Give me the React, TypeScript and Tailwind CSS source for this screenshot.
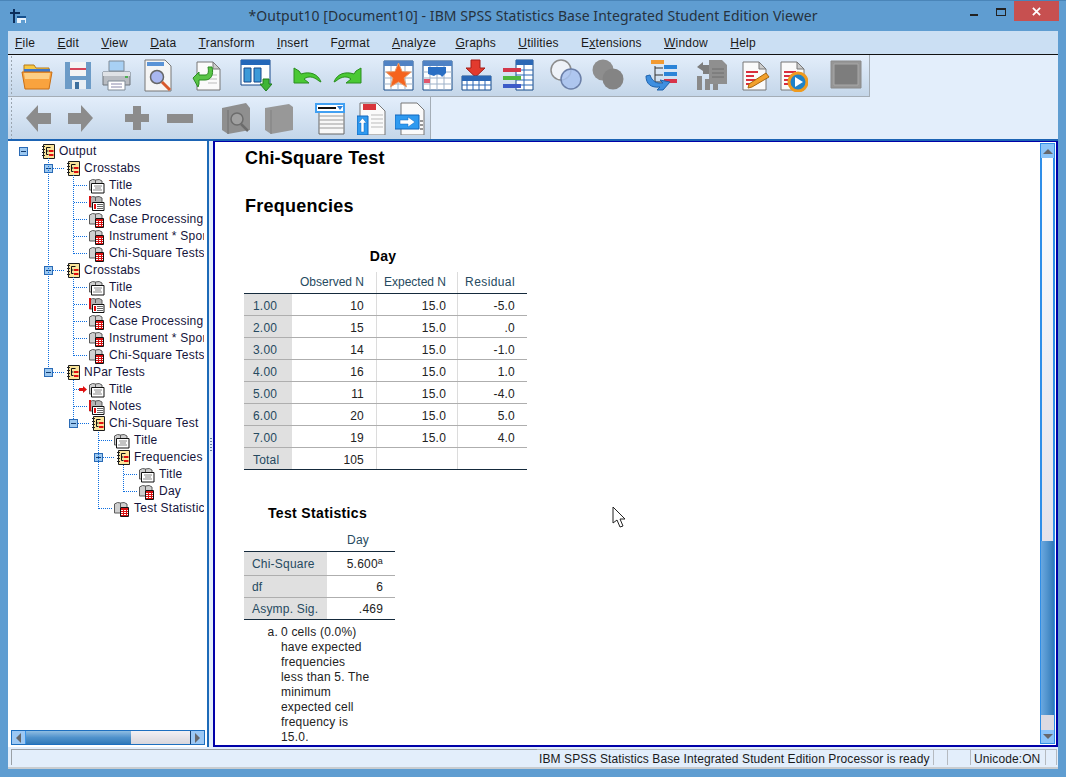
import type { ReactNode } from "react";

const sans = "font-['Liberation_Sans',Arial,sans-serif]";

function Doc({ children }: { children?: ReactNode }) {
  return (
    <>
      <path d="M5 3h16l7 7v21H5z" fill="#fafafa" stroke="#777" />
      <path d="M21 3v7h7z" fill="#ccc" stroke="#777" />
      {children}
    </>
  );
}

const toolbarIcons: Record<string, ReactNode> = {
  open: (
    <>
      <path d="M3 9V6h10l2 3h13v6H3z" fill="#f6c945" stroke="#b5791a" />
      <path d="M3 10h26v5H3z" fill="#3f78c9" />
      <path d="M1 13h30l-3 17H4z" fill="#f9a33e" stroke="#c96f14" />
      <path d="M3 14h26l-1 6H4z" fill="#fdcf85" />
    </>
  ),
  save: (
    <>
      <path d="M3 3h26v27H3z" fill="#6c9bc7" />
      <path d="M8 3h16v14H8z" fill="#f4f4f4" />
      <path d="M8 10h16" stroke="#d6465a" strokeWidth="2" />
      <path d="M10 21h14v9H10z" fill="#e8eef4" />
      <path d="M13 23h4v7h-4z" fill="#3d6f9e" />
    </>
  ),
  print: (
    <>
      <path d="M8 2h15v10H8z" fill="#a8d0f4" stroke="#7e8a96" />
      <path d="M2 13h27v13H2z" fill="#b8bcc2" stroke="#6f747a" />
      <path d="M2 13h27v4H2z" fill="#dfe2e6" />
      <path d="M7 22h17v9H7z" fill="#fff" stroke="#7e8a96" />
      <path d="M10 25h11M10 28h11" stroke="#88a" />
      <rect x="24" y="17" width="3" height="2" fill="#4caf50" />
    </>
  ),
  preview: (
    <>
      <path d="M3 1h20l6 6v25H3z" fill="#f5f5f5" stroke="#777" />
      <path d="M5 3h17v4H5z" fill="#5a93d6" />
      <circle cx="15" cy="18" r="6.500" fill="#a9b7f0" stroke="#666" strokeWidth="1.500" />
      <path d="M20 23l8 8" stroke="#d8592c" strokeWidth="3" />
    </>
  ),
  exportDoc: (
    <>
      <Doc>
        <path d="M16 16h9M16 20h9M16 24h9" stroke="#bbb" />
      </Doc>
      <path d="M1 19l6-6v3h6c3 0 4-2 3-8h4c2 8-1 13-7 13H7v4l-1 3z" fill="#59c447" stroke="#2a8a22" />
    </>
  ),
  designate: (
    <>
      <path d="M1 1h29v25H1z" fill="#fff" stroke="#15468a" />
      <path d="M1 1h29v5H1z" fill="#2467b9" />
      <path d="M4 9h7v14H4zM14 9h7v14h-7z" fill="#3d9ad8" stroke="#15468a" />
      <path d="M23 20h6v5h3l-6 7-6-7h3z" fill="#3fb535" stroke="#1e7d1c" />
    </>
  ),
  undo: <path d="M3 9v15h15l-5-4c4-3 9-3 15 2l2 1c-3-8-11-11-20-8L8 12z" fill="#4ac934" stroke="#2a8e20" />,
  redo: <path d="M29 9v15H14l5-4c-4-3-9-3-15 2l-2 1c3-8 11-11 20-8l2-3z" fill="#4ac934" stroke="#2a8e20" />,
  star: (
    <>
      <path d="M1 2h29v29H1z" fill="#fff" stroke="#174a88" />
      <path d="M1 2h29v5H1z" fill="#4f82c4" />
      <path d="M1 13h29M1 19h29M1 25h29M8 7v24M15 7v24M22 7v24" stroke="#9db1c8" />
      <path d="M15.500 4l3.600 8.500 9 .6-7 5.800 2.400 9-8-5-8 5 2.400-9-7-5.800 9-.6z" fill="#f5631e" stroke="#e8a070" />
    </>
  ),
  table: (
    <>
      <path d="M1 2h29v29H1z" fill="#fff" stroke="#174a88" />
      <path d="M1 2h29v5H1z" fill="#4f82c4" />
      <path d="M1 13h29M1 19h29M1 25h29M8 7v24M15 7v24M22 7v24" stroke="#9db1c8" />
      <path d="M6 8h18v6l-4 4c-2-3-5-3-8-1l-6-2z" fill="#2a6fc4" />
      <path d="M2 20h6v4H2z" fill="#e2566c" />
    </>
  ),
  insertCase: (
    <>
      <path d="M10 1h9v8h5l-9.500 9L5 9h5z" fill="#e23a2e" stroke="#a51c16" />
      <path d="M1 17h29v14H1z" fill="#fff" stroke="#174a88" />
      <path d="M1 17h29v5H1z" fill="#2b67b5" />
      <path d="M1 26h29M6 22v9M12 22v9M18 22v9M24 22v9" stroke="#2b67b5" />
    </>
  ),
  variables: (
    <>
      <path d="M14 1h17v30H14z" fill="#fff" stroke="#174a88" />
      <path d="M14 1h17v5H14z" fill="#2b67b5" />
      <path d="M14 11h17M14 16h17M14 21h17M14 26h17M22 6v25" stroke="#2b67b5" />
      <path d="M1 9h18v4H1z" fill="#d3384a" />
      <path d="M1 17h18v4H1z" fill="#4fb83e" />
      <path d="M1 25h18v4H1z" fill="#3c5bc8" />
    </>
  ),
  circles: (
    <>
      <circle cx="11" cy="11" r="10" fill="#eef2f8" stroke="#8c8c8c" strokeWidth="1.500" />
      <circle cx="21" cy="20" r="10" fill="#a8c2ee" fillOpacity="0.850" stroke="#6b7fa8" strokeWidth="1.500" />
    </>
  ),
  circlesGray: (
    <>
      <circle cx="11" cy="11" r="10.500" fill="#8e8e8e" />
      <circle cx="21" cy="20" r="10.500" fill="#848484" />
    </>
  ),
  tree: (
    <>
      <path d="M10 7v18M10 9h8M10 16h8M10 23h8" stroke="#333" />
      <path d="M6 1h13v4H6z" fill="#f29a32" />
      <path d="M19 6h13v4H19zM19 13h13v4H19z" fill="#2b84d8" />
      <path d="M19 20h13v4H19z" fill="#d8344a" />
      <path d="M1 17c0 8 5 12 14 11l-3 3h6l7-8-10-2 3 3c-7 1-11-2-13-8z" fill="#3e8fe0" stroke="#1e62ac" />
    </>
  ),
  pivotGray: (
    <>
      <path d="M14 1h13l5 5v19H14z" fill="#8f8f8f" />
      <path d="M17 10h12M17 14h12M17 18h12" stroke="#6f6f6f" />
      <path d="M2 17h5v14H2zM10 20h5v11h-5zM18 25h5v6h-5z" fill="#8a8a8a" />
      <path d="M2 8l6-5v3h6v9H8v-3z" fill="#7d7d7d" />
    </>
  ),
  docPencil: (
    <Doc>
      <path d="M8 13h12M8 17h8M8 21h10M8 25h7" stroke="#d92e3e" strokeWidth="2" />
      <path d="M11 25l17-11 3 4-17 10-4 1z" fill="#f2a12c" stroke="#a8660e" />
    </Doc>
  ),
  docPlay: (
    <>
      <Doc>
        <path d="M8 13h12M8 17h8M8 21h10M8 25h7" stroke="#d92e3e" strokeWidth="2" />
      </Doc>
      <circle cx="22" cy="23" r="9" fill="#1f82c8" stroke="#ef9a1e" strokeWidth="3" />
      <path d="M19 18l8 5-8 5z" fill="#fff" />
    </>
  ),
  squareGray: (
    <>
      <path d="M1 2h30v27H1z" fill="#969696" stroke="#8a8a8a" />
      <path d="M4 5h24v21H4z" fill="#7d7d7d" stroke="#a8a8a8" />
    </>
  ),
  left: <path d="M3 16L15 3v8h13v11H15v8z" fill="#8c8c8c" />,
  right: <path d="M29 16L17 3v8H4v11h13v8z" fill="#8c8c8c" />,
  plus: <path d="M12 4h8v8h8v8h-8v8h-8v-8H4v-8h8z" fill="#8c8c8c" />,
  minus: <path d="M3 12h26v9H3z" fill="#8c8c8c" />,
  bookSearch: (
    <>
      <path d="M2 6l24-5 4 5v22l-22 4-6-4z" fill="#8f8f8f" />
      <path d="M8 8v24" stroke="#707070" />
      <circle cx="17" cy="17" r="6" fill="#a0a0a0" stroke="#6c6c6c" strokeWidth="1.500" />
      <path d="M21 22l7 7" stroke="#6c6c6c" strokeWidth="2.500" />
    </>
  ),
  book: (
    <>
      <path d="M2 6l24-4 4 3v23l-22 4-6-4z" fill="#989898" />
      <path d="M8 8v24" stroke="#808080" />
    </>
  ),
  listBox: (
    <>
      <path d="M5 8h25v24H5z" fill="#f8f8f8" stroke="#666" />
      <path d="M5 14h25M5 18h25M5 22h25M5 26h25" stroke="#9a9a9a" />
      <path d="M1 1h30v10H1z" fill="#41a0f2" />
      <path d="M3 3h26v6H3z" fill="#fff" />
      <path d="M4 5h18v2H4z" fill="#111" />
      <path d="M23 4h6l-3 4z" fill="#2b7fd8" />
    </>
  ),
  docUp: (
    <>
      <path d="M3 1h17l8 8v24H3z" fill="#fafafa" stroke="#777" />
      <path d="M6 2h13v6H6z" fill="#d8343a" />
      <path d="M14 13h12M14 17h12M14 21h12M14 25h12" stroke="#bbb" />
      <path d="M0 14h11v19H0z" fill="#2f9af0" stroke="#1366bc" />
      <path d="M5.500 16l4 5H7v9H4v-9H1.500z" fill="#fff" stroke="#1366bc" strokeWidth="0.500" />
    </>
  ),
  docRight: (
    <>
      <path d="M6 1h16l7 7v25H6z" fill="#fafafa" stroke="#777" />
      <path d="M25 19h3M25 23h3M25 27h3" stroke="#333" />
      <path d="M0 13h24v14H0z" fill="#2f9af0" stroke="#1366bc" />
      <path d="M5 18h8v-3l7 5-7 5v-3H5z" fill="#fff" stroke="#1366bc" strokeWidth="0.500" />
    </>
  ),
};

function ToolIcon({ name, ml }: { name: string; ml: string }) {
  return (
    <svg viewBox="0 0 32 33" className={`w-[32px] h-[33px] shrink-0 ${ml}`}>
      {toolbarIcons[name]}
    </svg>
  );
}

function Grip() {
  return <div className="w-[3px] h-full ml-[2px] shrink-0 bg-[radial-gradient(circle,#9aa5b0_1px,transparent_1px)] bg-[length:3px_4px]" />;
}

function TreeIcon({ kind }: { kind: string }) {
  if (kind === "log") {
    return (
      <svg viewBox="0 0 14 15" className="w-[14px] h-[15px] shrink-0">
        <path d="M2.500 .5h11v14h-11z" fill="#fbe59b" stroke="#1c1c1c" />
        <path d="M1 2.500h3M1 5.500h3M1 8.500h3M1 11.500h3" stroke="#222" />
        <path d="M5.500 3.500h4M5.500 3.500v7h2M5.500 7h2" fill="none" stroke="#111" />
        <path d="M8 6h4.500v2H8zM8 10h4.500v2H8z" fill="#e01010" />
      </svg>
    );
  }
  const isNotes = kind === "notes";
  return (
    <svg viewBox="0 0 17 16" className="w-[17px] h-[16px] shrink-0">
      <path d="M1.500 3q3-2.500 6-1 4-1.500 6.500 1v9H1.500z" fill={isNotes ? "#b4b4b4" : "#cfcfcf"} stroke="#5a5a5a" />
      <path d="M7.500 2v4" stroke="#5a5a5a" />
      {isNotes && <path d="M1 1h2v11H1z" fill="#d81010" />}
      {kind === "title" ? (
        <>
          <path d="M3.500 5.500h12.500v9.500H3.500z" fill="#fff" stroke="#111" />
          <path d="M6 8h8M7 10h6M5 12h9" stroke="#888" />
        </>
      ) : isNotes ? (
        <>
          <path d="M4.500 7.500h11.500v8H4.500z" fill="#fff" stroke="#111" />
          <path d="M6 9h2v5H6z" fill="#e01010" />
          <path d="M9 9.500h6M9 11.500h6M9 13.500h6" stroke="#666" />
        </>
      ) : (
        <>
          <path d="M7.500 6.500h8v9h-8z" fill="#fff" stroke="#111" />
          <path d="M8 7h7v2H8zM8 10h7v1H8zM8 12h7v1H8zM8 14h7v1H8zM10 9h1v6h-1zM13 9h1v6h-1z" fill="#d81010" />
        </>
      )}
    </svg>
  );
}

function Expander() {
  return (
    <span className="w-[9px] h-[9px] shrink-0 border border-[#2a6ab5] bg-[#9cc8f0] flex items-center justify-center">
      <span className="w-[5px] h-px bg-[#123c70]" />
    </span>
  );
}

type Node = { label: string; depth: number; kind: string; open?: boolean; arrow?: boolean };

const crosstabs: Node[] = [
  { label: "Crosstabs", depth: 1, kind: "log", open: true },
  { label: "Title", depth: 2, kind: "title" },
  { label: "Notes", depth: 2, kind: "notes" },
  { label: "Case Processing Summary", depth: 2, kind: "table" },
  { label: "Instrument * Sport Crosstabulation", depth: 2, kind: "table" },
  { label: "Chi-Square Tests", depth: 2, kind: "table" },
];

const treeNodes: Node[] = [
  { label: "Output", depth: 0, kind: "log", open: true },
  ...crosstabs,
  ...crosstabs,
  { label: "NPar Tests", depth: 1, kind: "log", open: true },
  { label: "Title", depth: 2, kind: "title", arrow: true },
  { label: "Notes", depth: 2, kind: "notes" },
  { label: "Chi-Square Test", depth: 2, kind: "log", open: true },
  { label: "Title", depth: 3, kind: "title" },
  { label: "Frequencies", depth: 3, kind: "log", open: true },
  { label: "Title", depth: 4, kind: "title" },
  { label: "Day", depth: 4, kind: "table" },
  { label: "Test Statistics", depth: 3, kind: "table" },
];

const treeIndent = ["pl-[11px]", "pl-[36px]", "pl-[61px]", "pl-[86px]", "pl-[111px]"];

function TreeRow({ node }: { node: Node }) {
  return (
    <div className={`h-[17px] flex items-center ${treeIndent[node.depth]}`}>
      <div className="w-[21px] shrink-0 flex items-center justify-start">
        {node.open ? (
          <Expander />
        ) : node.arrow ? (
          <svg viewBox="0 0 8 7" className="w-[8px] h-[7px] ml-[10px] shrink-0">
            <path d="M0 2h4V0l4 3.500L4 7V5H0z" fill="#e01010" />
          </svg>
        ) : null}
      </div>
      <div className={`${node.kind === "log" ? "w-[18px] pl-[1px]" : "w-[20px] -ml-[2px]"} shrink-0 flex items-center`}>
        <TreeIcon kind={node.kind} />
      </div>
      <span className="whitespace-nowrap text-[12px] leading-[17px] tracking-[0.25px] ml-[1px] text-[#14143c]">{node.label}</span>
    </div>
  );
}

function TreeLines() {
  return (
    <svg className="absolute left-0 top-[1px] w-[198px] h-[400px] pointer-events-none" viewBox="0 0 198 400" shapeRendering="crispEdges">
      <g stroke="#0f6fe0" strokeDasharray="1 1" fill="none">
        <path d="M40.500 16V226M45 26.500h11M45 128.500h11M45 230.500h11" />
        <path d="M65.500 33V111.500M65.500 43.500h13M65.500 60.500h13M65.500 77.500h13M65.500 94.500h13M65.500 111.500h13" />
        <path d="M65.500 135V213.500M65.500 145.500h13M65.500 162.500h13M65.500 179.500h13M65.500 196.500h13M65.500 213.500h13" />
        <path d="M65.500 238V277M65.500 247.500h6M65.500 264.500h13M70 281.500h11" />
        <path d="M90.500 290V366.500M90.500 298.500h13M95 315.500h11M90.500 366.500h13" />
        <path d="M115.500 323V349.500M115.500 332.500h13M115.500 349.500h13" />
      </g>
    </svg>
  );
}

function HScroll() {
  return (
    <div className="h-[15px] ml-[3px] mr-[2px] mb-[2px] flex border border-[#1d6fc0] bg-[#e3e1e8] shrink-0 relative">
      <div className="w-[14px] bg-[#9cc8f4] flex items-center justify-center border-r border-[#3b94e6]">
        <span className="border-y-[5px] border-y-transparent border-r-[5px] border-r-[#66686c]" />
      </div>
      <div className="w-[105px] bg-gradient-to-b from-[#8fbde2] via-[#4f92cc] to-[#2f78b8]" />
      <div className="flex-1 bg-gradient-to-b from-[#f2f0f4] to-[#d8d6dc]" />
      <div className="w-[14px] bg-[#9cc8f4] flex items-center justify-center border-l border-[#173f6e]">
        <span className="border-y-[5px] border-y-transparent border-l-[5px] border-l-[#66686c]" />
      </div>
    </div>
  );
}

function VScroll() {
  return (
    <div className="w-[15px] my-[1px] shrink-0 flex flex-col border border-[#2f8ee8] bg-white">
      <div className="h-[14px] bg-[#8cc4f8] flex items-center justify-center">
        <span className="border-x-[5px] border-x-transparent border-b-[5px] border-b-[#66686c]" />
      </div>
      <div className="flex-1 border-x border-[#2f8ee8] bg-gradient-to-b from-white to-[#e4e2ea]" />
      <div className="h-[174px] bg-gradient-to-r from-[#6aa8e0] via-[#4f92cc] to-[#2f78b8]" />
      <div className="h-[15px] bg-[#dcdae2]" />
      <div className="h-[13px] bg-[#8cc4f8] flex items-center justify-center">
        <span className="border-x-[5px] border-x-transparent border-t-[5px] border-t-[#66686c]" />
      </div>
    </div>
  );
}

const dayRows = [
  ["1.00", "10", "15.0", "-5.0"],
  ["2.00", "15", "15.0", ".0"],
  ["3.00", "14", "15.0", "-1.0"],
  ["4.00", "16", "15.0", "1.0"],
  ["5.00", "11", "15.0", "-4.0"],
  ["6.00", "20", "15.0", "5.0"],
  ["7.00", "19", "15.0", "4.0"],
  ["Total", "105", "", ""],
];

function DayTable() {
  return (
    <div className="ml-[29px] w-[283px] tracking-[0.2px] text-[12px]">
      <div className="mt-[4px] text-center pr-[5px] text-[14px] font-bold text-black h-[29px] leading-[27px]">Day</div>
      <div className="flex h-[22px] border-b border-[#152a3c] text-[#264a60] leading-[20px] tracking-normal">
        <div className="w-[48px]" />
        <div className="w-[85px] pr-[12px] text-right border-r border-[#dcdcdc]">Observed N</div>
        <div className="w-[81px] pr-[11px] text-right border-r border-[#dcdcdc]">Expected N</div>
        <div className="w-[69px] pr-[12px] text-right tracking-[0.4px]">Residual</div>
      </div>
      {dayRows.map((row, i) => (
        <div key={row[0]} className={`flex h-[22px] leading-[24px] border-b ${i === 7 ? "border-[#152a3c]" : "border-[#aeaeae]"} text-[#222]`}>
          <div className="w-[48px] pl-[9px] bg-[#e0e0e0] text-[#264a60]">{row[0]}</div>
          <div className="w-[85px] pr-[12px] text-right border-r border-[#dcdcdc]">{row[1]}</div>
          <div className="w-[81px] pr-[11px] text-right border-r border-[#dcdcdc]">{row[2]}</div>
          <div className="w-[69px] pr-[12px] text-right">{row[3]}</div>
        </div>
      ))}
    </div>
  );
}

const footnote = ["0 cells (0.0%)", "have expected", "frequencies", "less than 5. The", "minimum", "expected cell", "frequency is", "15.0."];

function StatsTable() {
  return (
    <div className="ml-[29px] mt-[30px] w-[151px] tracking-[0.2px] text-[12px]">
      <div className="text-center pr-[4px] text-[14px] tracking-[0.35px] font-bold text-black h-[30px] leading-[27px]">Test Statistics</div>
      <div className="flex h-[22px] leading-[20px] border-b border-[#152a3c] text-[#264a60]">
        <div className="w-[83px]" />
        <div className="w-[68px] pr-[26px] text-right">Day</div>
      </div>
      <div className="flex h-[24px] leading-[24px] border-b border-[#aeaeae] text-[#222]">
        <div className="w-[83px] pl-[8px] bg-[#e0e0e0] text-[#264a60]">Chi-Square</div>
        <div className="w-[68px] pr-[12px] text-right">
          5.600<sup className="text-[9px] leading-none">a</sup>
        </div>
      </div>
      <div className="flex h-[22px] leading-[22px] border-b border-[#aeaeae] text-[#222]">
        <div className="w-[83px] pl-[8px] bg-[#e0e0e0] text-[#264a60]">df</div>
        <div className="w-[68px] pr-[12px] text-right">6</div>
      </div>
      <div className="flex h-[22px] leading-[22px] border-b border-[#152a3c] text-[#222]">
        <div className="w-[83px] pl-[8px] bg-[#e0e0e0] text-[#264a60]">Asymp. Sig.</div>
        <div className="w-[68px] pr-[12px] text-right">.469</div>
      </div>
      <div className="flex mt-[5px] leading-[15px] text-[#222]">
        <span className="w-[37px] shrink-0 pr-[3px] text-right">a.</span>
        <div className="whitespace-nowrap">
          {footnote.map((line) => (
            <div key={line}>{line}</div>
          ))}
        </div>
      </div>
    </div>
  );
}

const menus: [string, string, string][] = [
  ["", "F", "ile"],
  ["", "E", "dit"],
  ["", "V", "iew"],
  ["", "D", "ata"],
  ["", "T", "ransform"],
  ["", "I", "nsert"],
  ["F", "o", "rmat"],
  ["", "A", "nalyze"],
  ["", "G", "raphs"],
  ["", "U", "tilities"],
  ["E", "x", "tensions"],
  ["", "W", "indow"],
  ["", "H", "elp"],
];

const row1: [string, string][] = [
  ["open", "ml-[8px]"],
  ["save", "ml-[9px]"],
  ["print", "ml-[7px]"],
  ["preview", "ml-[9px]"],
  ["exportDoc", "ml-[18px]"],
  ["designate", "ml-[16px]"],
  ["undo", "ml-[19px]"],
  ["redo", "ml-[9px]"],
  ["star", "ml-[19px]"],
  ["table", "ml-[7px]"],
  ["insertCase", "ml-[7px]"],
  ["variables", "ml-[9px]"],
  ["circles", "ml-[16px]"],
  ["circlesGray", "ml-[10px]"],
  ["tree", "ml-[21px]"],
  ["pivotGray", "ml-[18px]"],
  ["docPencil", "ml-[11px]"],
  ["docPlay", "ml-[6px]"],
  ["squareGray", "ml-[22px]"],
];

const row2: [string, string][] = [
  ["left", "ml-[10px]"],
  ["right", "ml-[9px]"],
  ["plus", "ml-[25px]"],
  ["minus", "ml-[11px]"],
  ["bookSearch", "ml-[24px]"],
  ["book", "ml-[11px]"],
  ["listBox", "ml-[19px]"],
  ["docUp", "ml-[11px]"],
  ["docRight", "ml-[6px]"],
];

export default function App() {
  return (
    <div className={`w-[1066px] h-[777px] overflow-hidden flex flex-col bg-[#5f9dd1] border-t border-[#4a85b8] ${sans}`}>
      {/* title bar */}
      <div className="h-[30px] shrink-0 flex items-center">
        <svg viewBox="0 0 16 16" className="w-[16px] h-[16px] ml-[10px] shrink-0">
          <path d="M3 1h2v3h5v2H5v9H3V6H0V4h3z" fill="#0d2f5c" />
          <path d="M7 8h9v7H7z" fill="#e8f2fb" />
          <path d="M7 8h9v2H7z" fill="#15508e" />
          <path d="M11 12h4v3h-4z" fill="#5f9dd1" />
        </svg>
        <div className="flex-1 text-center font-['Noto_Sans',sans-serif] text-[14px] tracking-[0.05px] text-[#26323e] pl-[70px] -mt-[1px] whitespace-nowrap">
          *Output10 [Document10] - IBM SPSS Statistics Base Integrated Student Edition Viewer
        </div>
        <div className="flex items-start self-start shrink-0 mr-[7px]">
          <span className="w-[8px] h-[2px] mt-[13px] mr-[18px] bg-[#222]" />
          <span className="w-[10px] h-[8px] mt-[7px] mr-[8px] border border-t-2 border-[#222]" />
          <span className="w-[45px] h-[20px] bg-[#c75050] flex items-center justify-center text-white">
            <svg viewBox="0 0 10 10" className="w-[9px] h-[9px]">
              <path d="M1 1l8 8M9 1l-8 8" stroke="#fff" strokeWidth="2" />
            </svg>
          </span>
        </div>
      </div>

      <div className="flex-1 min-h-0 mx-[8px] flex flex-col bg-[#e3eefb]">
        {/* menu */}
        <div className="h-[24px] shrink-0 bg-[#cbdff3] border-b-[1px] border-[#111] flex items-center pl-[7px] gap-[22.300px] text-[12px] tracking-[0.2px] text-[#1a1a1a]">
          {menus.map(([before, key, after]) => (
            <span key={before + key + after} className={key === "A" ? "-mr-[3px]" : ""}>
              {before}
              <span className="underline">{key}</span>
              {after}
            </span>
          ))}
        </div>

        {/* toolbars */}
        <div className="h-[42px] w-[862px] shrink-0 flex items-center border-r border-b border-[#a4adb6] bg-gradient-to-b from-[#e3eefb] to-[#c4d6e9]">
          <Grip />
          {row1.map(([name, ml]) => (
            <ToolIcon key={name} name={name} ml={ml} />
          ))}
        </div>
        <div className="h-[42px] w-[423px] shrink-0 flex items-center border-r border-[#a4adb6] bg-gradient-to-b from-[#e3eefb] to-[#c4d6e9]">
          <Grip />
          {row2.map(([name, ml]) => (
            <ToolIcon key={name} name={name} ml={ml} />
          ))}
        </div>

        {/* panes */}
        <div className="h-[608px] shrink-0 flex border-t-2 border-[#1d64b4]">
          <div className="w-[201px] shrink-0 bg-white border-r-2 border-[#1d6ab8] flex flex-col relative overflow-hidden">
            <TreeLines />
            <div className="flex-1 min-h-0 pt-[2px] overflow-hidden w-[196px]">
              {treeNodes.map((node, i) => (
                <TreeRow key={i} node={node} />
              ))}
            </div>
            <HScroll />
          </div>
          <div className="w-[4px] shrink-0 flex items-center justify-center bg-[#e3eefb]">
            <span className="w-[2px] h-[14px] bg-[radial-gradient(circle,#5f7f9f_1px,transparent_1px)] bg-[length:2px_3px]" />
          </div>
          <div className="flex-1 min-w-0 flex border-2 border-t-[1px] border-[#0000a8] bg-white pr-[1px]">
            <div className="flex-1 min-w-0 relative overflow-hidden">
              <div className="h-[28px] pl-[30px] pt-[6px] text-[18px] tracking-[0.2px] leading-[20px] font-bold text-black">Chi-Square Test</div>
              <div className="h-[69px] pl-[30px] pt-[26px] text-[18px] tracking-[0.25px] leading-[20px] font-bold text-black">Frequencies</div>
              <DayTable />
              <StatsTable />
              <svg viewBox="0 0 14 22" className="absolute left-[397px] top-[364px] w-[14px] h-[22px]">
                <path d="M1 1v16l4-3 3 7 3-1-3-7h5z" fill="#fff" stroke="#222" />
              </svg>
            </div>
            <VScroll />
          </div>
        </div>

        {/* status bar */}
        <div className="flex-1 min-h-0 flex text-[12px] leading-[18px] tracking-[0.1px] text-[#1a1a1a] py-[2px] pr-[1px] pl-[3px] border-b-2 border-[#c8ccd0]">
          <div className="flex-1 border-l border-t border-[#9aa0a6]" />
          <div className="w-[397px] border-r border-t border-[#b5bac0] pl-[2px] whitespace-nowrap">IBM SPSS Statistics Base Integrated Student Edition Processor is ready</div>
          <div className="w-[14px] border-r border-t border-[#b5bac0]" />
          <div className="w-[23px] border-r border-t border-[#b5bac0]" />
          <div className="w-[75px] border-r border-t border-[#b5bac0] pl-[3px]">Unicode:ON</div>
          <div className="w-[11px] border-r border-t border-[#b5bac0]" />
        </div>
      </div>
      <div className="h-[8px] shrink-0" />
    </div>
  );
}
